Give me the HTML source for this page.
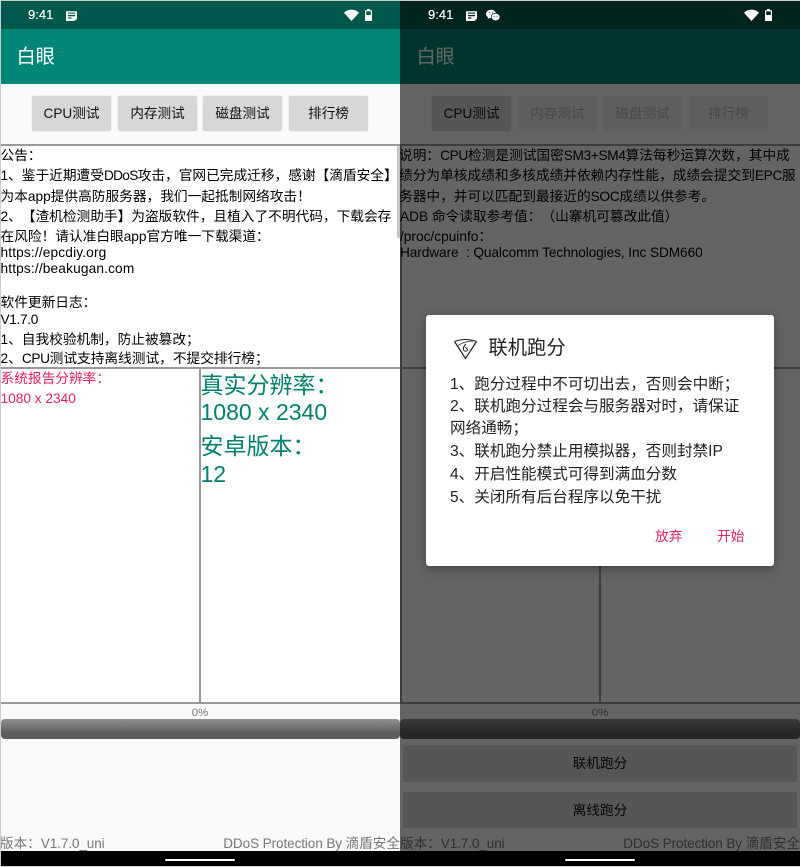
<!DOCTYPE html>
<html lang="zh">
<head>
<meta charset="utf-8">
<title>白眼</title>
<style>
html,body{margin:0;padding:0;background:#fff;}
body{width:800px;height:867px;position:relative;overflow:hidden;font-family:"Liberation Sans","Noto Sans CJK SC",sans-serif;text-spacing-trim:space-all;}
.a{position:absolute;}
.t{position:absolute;white-space:nowrap;line-height:20px;font-size:13.7px;color:#000;}
.n{letter-spacing:-.35px;}
.w{letter-spacing:.15px;}
.p{position:absolute;top:0;width:400px;height:867px;overflow:hidden;background:#fafafa;}
.st{position:absolute;left:0;top:1px;width:400px;height:28px;background:#00574b;}
.ab{position:absolute;left:0;top:29px;width:400px;height:55px;background:#008577;}
.ttl{position:absolute;left:16.5px;top:45px;font-size:19.2px;line-height:26px;color:#fff;}
.tm{position:absolute;left:28px;top:7px;font-size:13px;line-height:16px;color:#fff;text-shadow:0 0 .5px #fff;}
.btn{position:absolute;top:96px;height:35px;width:79px;background:#d6d7d7;border-radius:2px;text-align:center;font-size:13.6px;line-height:35px;color:#111;box-shadow:0 0 1px #bbb;}
.off{background:#ececec;color:#b4b4b4;box-shadow:none;}
.box{position:absolute;background:#fff;}
.ln{position:absolute;background:#999;}
.bar{position:absolute;left:1px;top:719px;width:399px;height:20px;border-radius:4px;background:linear-gradient(#8f918f,#5a5c5a 75%,#5c5e5c);}
.pct{position:absolute;left:0;width:400px;text-align:center;top:705px;font-size:11.4px;line-height:16px;color:#777;}
.ft{position:absolute;top:835px;font-size:13.6px;line-height:18px;color:#777;white-space:nowrap;}
.ft span{letter-spacing:-.12px;}
.nav{position:absolute;left:0;top:851px;width:400px;height:15px;background:#000;}
.hm{position:absolute;left:165px;top:8px;width:70px;height:2px;background:#fff;border-radius:1px;}
.ov{position:absolute;left:0;top:29px;width:400px;height:822px;background:rgba(0,0,0,.6);}
.big{position:absolute;left:200.5px;font-size:23px;line-height:30px;color:#00806e;white-space:nowrap;}
.red{position:absolute;left:.5px;font-size:13.7px;line-height:20px;color:#e91e63;white-space:nowrap;}
.bb{position:absolute;left:3px;width:394px;height:37px;background:#d6d7d7;border-radius:2px;text-align:center;font-size:13.7px;line-height:37px;color:#111;}
.dlg{position:absolute;left:426px;top:315px;width:348px;height:251px;background:#fff;border-radius:3px;box-shadow:0 3px 10px rgba(0,0,0,.35);}
.d{position:absolute;left:24px;white-space:nowrap;font-size:15.6px;line-height:22px;color:#222;}
.da{position:absolute;top:211.5px;font-size:13.7px;line-height:20px;color:#e0245f;white-space:nowrap;}
</style>
</head>
<body>

<!-- LEFT -->
<div class="p" style="left:0">
  <div class="st"></div>
  <div class="tm">9:41</div>
  <svg class="a" style="left:65px;top:10px" width="13" height="12" viewBox="0 0 13 12"><path d="M1 1.2h11v7.6l-2.6 2.2H1z" fill="#fff"/><path d="M3 3.2h7M3 5.6h7M3 8h3.5" stroke="#00574b" stroke-width="1.2"/></svg>
  <svg class="a" style="left:344px;top:9px" width="15" height="12" viewBox="0 0 15 12"><path d="M0 3.8C4 -.4 11 -.4 15 3.8L7.5 12z" fill="#fff"/></svg>
  <svg class="a" style="left:364px;top:8px" width="9" height="14" viewBox="0 0 9 14"><path d="M3 1h3v1.2h2V13H1V2.2h2z" fill="#fff"/><rect x="2.2" y="3.4" width="4.6" height="3.6" fill="#00574b"/></svg>
  <div class="ab"></div>
  <div class="ttl">白眼</div>
  <div class="btn" style="left:32px">CPU测试</div>
  <div class="btn" style="left:118px">内存测试</div>
  <div class="btn" style="left:203px">磁盘测试</div>
  <div class="btn" style="left:289px">排行榜</div>

  <div class="box" style="left:1px;top:146px;width:399px;height:221px"></div>
  <div class="box" style="left:1px;top:369px;width:198px;height:333px"></div>
  <div class="box" style="left:201px;top:369px;width:199px;height:333px"></div>
  <div class="ln" style="left:0;top:144px;width:400px;height:2px"></div>
  <div class="ln" style="left:0;top:367px;width:400px;height:2px"></div>
  <div class="ln" style="left:199px;top:369px;width:2px;height:334px"></div>
  <div class="ln" style="left:0;top:702px;width:400px;height:1.5px"></div>
  <div class="a" style="left:396.5px;top:146px;width:3px;height:92px;background:#c4c4c4"></div>

  <div class="t" style="left:.5px;top:145.5px">公告：</div>
  <div class="t" style="left:.5px;top:165.5px">1、鉴于近期遭受<span class="n" style="letter-spacing:-.7px">DDoS</span>攻击，官网已完成迁移，感谢【滴盾安全】</div>
  <div class="t" style="left:.5px;top:186.5px">为本app提供高防服务器，我们一起抵制网络攻击！</div>
  <div class="t" style="left:.5px;top:206.5px">2、【渣机检测助手】为盗版软件，且植入了不明代码，下载会存</div>
  <div class="t" style="left:.5px;top:226.5px">在风险！请认准白眼app官方唯一下载渠道：</div>
  <div class="t w" style="left:0.5px;top:242.5px">https://epcdiy.org</div>
  <div class="t w" style="left:0.5px;top:258.5px">https://beakugan.com</div>
  <div class="t" style="left:.5px;top:292.5px">软件更新日志：</div>
  <div class="t n" style="left:0.5px;top:309.5px">V1.7.0</div>
  <div class="t" style="left:.5px;top:329.5px">1、自我校验机制，防止被篡改；</div>
  <div class="t" style="left:.5px;top:348.5px">2、<span class="n">CPU</span>测试支持离线测试，不提交排行榜；</div>

  <div class="red" style="top:368.5px">系统报告分辨率：</div>
  <div class="red" style="top:388.5px">1080 x 2340</div>
  <div class="big" style="top:370px">真实分辨率：</div>
  <div class="big" style="top:397px">1080 x 2340</div>
  <div class="big" style="top:430.5px">安卓版本：</div>
  <div class="big" style="top:458.5px">12</div>

  <div class="pct">0%</div>
  <div class="bar"></div>
  <div class="ft" style="left:0">版本：<span>V1.7.0_uni</span></div>
  <div class="ft" style="right:0"><span>DDoS Protection By </span>滴盾安全</div>
  <div class="nav"><div class="hm"></div></div>
  <div class="a" style="left:0;top:0;width:400px;height:1px;background:#ccc"></div>
  <div class="a" style="left:0;top:0;width:1px;height:867px;background:#ccc"></div>
  <div class="a" style="left:0;top:866px;width:400px;height:1px;background:#ddd"></div>
</div>

<!-- RIGHT -->
<div class="p" style="left:400px">
  <div class="st" style="background:#00231e"></div>
  <div class="tm">9:41</div>
  <svg class="a" style="left:65px;top:10px" width="13" height="12" viewBox="0 0 13 12"><path d="M1 1.2h11v7.6l-2.6 2.2H1z" fill="#fff"/><path d="M3 3.2h7M3 5.6h7M3 8h3.5" stroke="#00231e" stroke-width="1.2"/></svg>
  <svg class="a" style="left:86px;top:9px" width="14" height="13" viewBox="0 0 14 13"><ellipse cx="5" cy="5" rx="5" ry="4.2" fill="#fff"/><path d="M2 8l-.3 2 2.3-1.2z" fill="#fff"/><ellipse cx="9.6" cy="8" rx="4.4" ry="3.7" fill="#fff" stroke="#00231e" stroke-width=".7"/><circle cx="3.6" cy="3.8" r=".6" fill="#00231e"/><circle cx="6.4" cy="3.8" r=".6" fill="#00231e"/><circle cx="8.2" cy="7.4" r=".5" fill="#00231e"/><circle cx="11" cy="7.4" r=".5" fill="#00231e"/></svg>
  <svg class="a" style="left:344px;top:9px" width="15" height="12" viewBox="0 0 15 12"><path d="M0 3.8C4 -.4 11 -.4 15 3.8L7.5 12z" fill="#fff"/></svg>
  <svg class="a" style="left:364px;top:8px" width="9" height="14" viewBox="0 0 9 14"><path d="M3 1h3v1.2h2V13H1V2.2h2z" fill="#fff"/><rect x="2.2" y="3.4" width="4.6" height="3.6" fill="#00231e"/></svg>
  <div class="ab"></div>
  <div class="ttl">白眼</div>
  <div class="btn" style="left:32px">CPU测试</div>
  <div class="btn off" style="left:118px">内存测试</div>
  <div class="btn off" style="left:203px">磁盘测试</div>
  <div class="btn off" style="left:289px">排行榜</div>

  <div class="ln" style="left:0;top:144px;width:400px;height:2px"></div>
  <div class="ln" style="left:0;top:367px;width:400px;height:2px"></div>
  <div class="ln" style="left:199px;top:369px;width:2px;height:334px"></div>
  <div class="ln" style="left:0;top:702px;width:400px;height:1.5px"></div>
  <div class="ln" style="left:0;top:144px;width:1.5px;height:560px"></div>

  <div class="t" style="left:-1px;top:145.5px">说明：<span class="n">CPU</span>检测是测试国密<span class="n">SM3+SM4</span>算法每秒运算次数，其中成</div>
  <div class="t" style="left:-1px;top:165.5px">绩分为单核成绩和多核成绩并依赖内存性能，成绩会提交到<span class="n">EPC</span>服</div>
  <div class="t" style="left:-1px;top:186.5px">务器中，并可以匹配到最接近的<span class="n">SOC</span>成绩以供参考。</div>
  <div class="t" style="left:0;top:206.5px">ADB 命令读取参考值：（山寨机可篡改此值）</div>
  <div class="t" style="left:0;top:226.5px">/proc/cpuinfo：</div>
  <div class="t" style="left:0;top:242.5px;letter-spacing:-.1px">Hardware &nbsp;: Qualcomm Technologies, Inc SDM660</div>

  <div class="pct">0%</div>
  <div class="bar" style="left:0;width:400px"></div>
  <div class="bb" style="top:745px">联机跑分</div>
  <div class="bb" style="top:792px;height:36px">离线跑分</div>
  <div class="ft" style="left:0">版本：<span>V1.7.0_uni</span></div>
  <div class="ft" style="right:0"><span>DDoS Protection By </span>滴盾安全</div>
  <div class="ov"></div>
  <div class="nav"><div class="hm"></div></div>
  <div class="a" style="left:0;top:0;width:400px;height:1px;background:#ccc"></div>
  <div class="a" style="left:0;top:866px;width:400px;height:1px;background:#ddd"></div>
</div>

<!-- DIALOG -->
<div class="dlg">
  <svg class="a" style="left:27px;top:23px" width="25" height="22" viewBox="0 0 25 22" fill="none" stroke="#222" stroke-width="1.2"><path d="M1.5 3.5L12.5 20.5L23.5 3.5"/><path d="M1.5 3.5Q12.5 -.5 23.5 3.5" stroke-width="1"/><path d="M5 7.5Q12 3 20 3" stroke-width=".8"/><path d="M12.8 6c-2.2 2.6-3.2 4.4-2 6.4.7 1.1 3 1.1 3.6-.2.6-1.5-1.6-2-2-3.2" stroke-width="1"/></svg>
  <div class="a" style="left:62.5px;top:19.5px;font-size:19.3px;line-height:28px;color:#222;white-space:nowrap">联机跑分</div>
  <div class="d" style="top:58.5px">1、跑分过程中不可切出去，否则会中断；</div>
  <div class="d" style="top:80.5px">2、联机跑分过程会与服务器对时，请保证</div>
  <div class="d" style="top:103px">网络通畅；</div>
  <div class="d" style="top:125.5px">3、联机跑分禁止用模拟器，否则封禁IP</div>
  <div class="d" style="top:148.5px">4、开启性能模式可得到满血分数</div>
  <div class="d" style="top:171.5px">5、关闭所有后台程序以免干扰</div>
  <div class="da" style="left:229px">放弃</div>
  <div class="da" style="left:291px">开始</div>
</div>

</body>
</html>
